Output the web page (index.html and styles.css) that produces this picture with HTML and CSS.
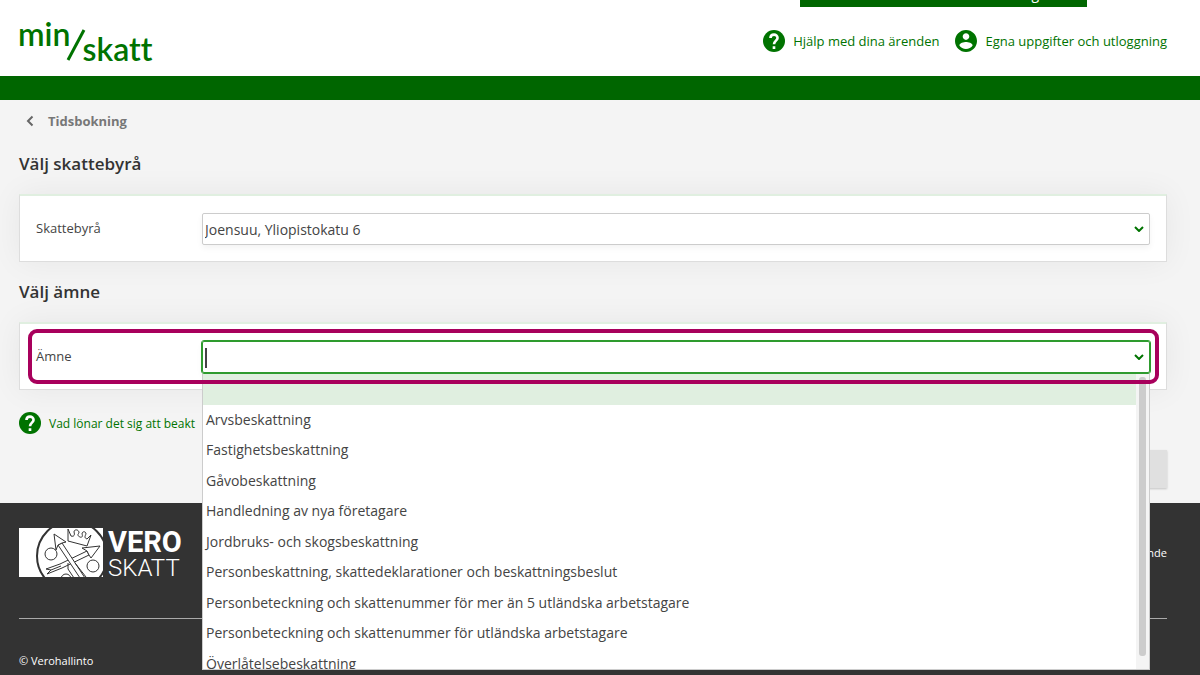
FILE: index.html
```
<!DOCTYPE html>
<html lang="sv">
<head>
    <meta charset="UTF-8">
    <meta name="viewport" content="width=device-width, initial-scale=1.0">
    <title>MinSkatt - Tidsbokning</title>
    <link rel="stylesheet" href="styles.css">
</head>
<body>
    <a class="skip-link" href="#main">g</a>

    <header class="header">
        <a class="logo" href="#" aria-label="min skatt">
            <span class="logo-min">min</span>
            <svg class="logo-slash" viewBox="0 0 20 32" aria-hidden="true"><path d="M18 1 2 31"/></svg>
            <span class="logo-skatt">skatt</span>
        </a>
        <nav class="header-nav">
            <a class="icon-link" href="#">
                <svg class="icon" viewBox="2 2 20 20" aria-hidden="true"><path d="M12 2a10 10 0 1 0 0 20 10 10 0 0 0 0-20z"/><path class="mark" d="M8.800 9.300C8.800 5.200 15.200 5.200 15.200 9.200 15.200 11.600 12 11.800 12 15M12 16.800v2.400"/></svg>
                Hjälp med dina ärenden
            </a>
            <a class="icon-link" href="#">
                <svg class="icon" viewBox="2 2 20 20" aria-hidden="true"><path d="M12 2C6.480 2 2 6.480 2 12s4.480 10 10 10 10-4.480 10-10S17.520 2 12 2zm0 3c1.660 0 3 1.340 3 3s-1.340 3-3 3-3-1.340-3-3 1.340-3 3-3zm0 14.200c-2.500 0-4.710-1.280-6-3.220.03-1.990 4-3.080 6-3.080 1.990 0 5.970 1.090 6 3.080-1.290 1.940-3.500 3.220-6 3.220z"/></svg>
                Egna uppgifter och utloggning
            </a>
        </nav>
    </header>
    <div class="green-bar"></div>

    <main class="main" id="main">
        <a class="back-link" href="#">
            <svg viewBox="0 0 8 12" aria-hidden="true"><path d="M6.500 1.500 2 6l4.500 4.500"/></svg>
            Tidsbokning
        </a>

        <h2>Välj skattebyrå</h2>
        <section class="card">
            <label for="office">Skattebyrå</label>
            <div class="field">
                <select id="office">
                    <option>Joensuu, Yliopistokatu 6</option>
                </select>
                <svg class="chevron" viewBox="0 0 10 6" aria-hidden="true"><path d="m1 1 4 4 4-4"/></svg>
            </div>
        </section>

        <h2>Välj ämne</h2>
        <section class="card">
            <label for="subject">Ämne</label>
            <div class="field open">
                <input type="text" id="subject" role="combobox" aria-expanded="true" aria-controls="subjects">
                <span class="caret"></span>
                <svg class="chevron" viewBox="0 0 10 6" aria-hidden="true"><path d="m1 1 4 4 4-4"/></svg>
                <div class="dropdown">
                    <ul id="subjects" role="listbox">
                        <li class="selected" role="option" aria-selected="true"></li>
                        <li role="option">Arvsbeskattning</li>
                        <li role="option">Fastighetsbeskattning</li>
                        <li role="option">Gåvobeskattning</li>
                        <li role="option">Handledning av nya företagare</li>
                        <li role="option">Jordbruks- och skogsbeskattning</li>
                        <li role="option">Personbeskattning, skattedeklarationer och beskattningsbeslut</li>
                        <li role="option">Personbeteckning och skattenummer för mer än 5 utländska arbetstagare</li>
                        <li role="option">Personbeteckning och skattenummer för utländska arbetstagare</li>
                        <li role="option">Överlåtelsebeskattning</li>
                    </ul>
                    <div class="scrollbar"><div class="thumb"></div></div>
                </div>
            </div>
            <div class="highlight"></div>
        </section>

        <a class="icon-link help" href="#">
            <svg class="icon" viewBox="2 2 20 20" aria-hidden="true"><path d="M12 2a10 10 0 1 0 0 20 10 10 0 0 0 0-20z"/><path class="mark" d="M8.800 9.300C8.800 5.200 15.200 5.200 15.200 9.200 15.200 11.600 12 11.800 12 15M12 16.800v2.400"/></svg>
            Vad lönar det sig att beakt
        </a>

        <div class="actions">
            <button type="button" class="next" aria-label="Nästa" disabled></button>
        </div>
    </main>

    <footer class="footer">
        <div class="footer-top">
            <a class="vero" href="#" aria-label="Vero Skatt">
                <svg class="vero-mark" viewBox="0 0 84 49" aria-hidden="true">
                    <rect class="paper" width="84" height="49"/>
                    <circle class="ring" cx="53" cy="28" r="35"/>
                    <g class="line">
                        <circle cx="32" cy="26" r="6"/>
                        <circle cx="74" cy="38" r="6"/>
                        <circle cx="47" cy="51" r="5"/>
                        <!-- crown -->
                        <path d="M49 1v12l19 5 4-11-4 4c-3-1-2-3-1-5 0-3-4-3-4 0 1 2 0 4-2 3s-3-2-1-4c0-4-5-4-5-1 1 3 0 5-3 4z"/>
                        <!-- arrow pointing up right -->
                        <path class="paper" d="m27 41 14-5 27-13 2 4-27 13-15 6 4-4z"/>
                        <path class="paper" d="m81 18-18 2 5 3 2 4 2 3z"/>
                        <path d="m32 42 10-4"/>
                        <!-- arrow pointing up left -->
                        <path class="paper" d="m39 17 22 33h5L43 15z"/>
                        <path class="paper" d="m35 6 12 8-4 1-4 2-2 5z"/>
                        <path d="m56 35 11 14M49 35v6l6 9"/>
                    </g>
                </svg>
                <span class="vero-name"><b>VERO</b><span>SKATT</span></span>
            </a>
            <a class="footer-link" href="#">Om e-tjänsten och användande</a>
        </div>
        <p class="copyright">© Verohallinto</p>
    </footer>
</body>
</html>
```
FILE: styles.css
```
* {
    box-sizing: border-box;
}

body {
    margin: 0;
    height: 100vh;
    overflow: hidden;
    display: flex;
    flex-direction: column;
    font-family: "Open Sans", "Noto Sans", sans-serif;
    font-size: 14px;
    color: #444;
    background: #f4f4f4;
}

a {
    color: #007300;
    text-decoration: none;
}

.skip-link {
    position: absolute;
    top: -16px;
    left: 800px;
    width: 287px;
    height: 23px;
    padding-right: 48px;
    background: #006600;
    color: #fff;
    line-height: 20px;
    text-align: right;
}

.header {
    flex: none;
    display: flex;
    justify-content: space-between;
    height: 76px;
    padding: 0 33px 0 18px;
    background: #fff;
}

.logo {
    display: flex;
    align-items: flex-start;
    font-family: Lato, sans-serif;
    font-size: 32px;
    font-weight: 600;
    line-height: 32px;
    font-variant-ligatures: none;
}

.logo-min {
    margin-top: 18px;
}

.logo-slash {
    width: 20px;
    height: 32px;
    margin: 29px -4px 0;
    fill: none;
    stroke: #007300;
    stroke-width: 3;
}

.logo-skatt {
    margin-top: 33px;
}

.header-nav {
    display: flex;
    gap: 16px;
    padding-top: 30px;
}

.icon-link {
    display: flex;
    align-items: center;
    gap: 8px;
    height: 22px;
    font-size: 13px;
    white-space: nowrap;
}

.icon {
    flex: none;
    width: 22px;
    height: 22px;
    fill: #007300;
}

.icon .mark {
    fill: none;
    stroke: #fff;
    stroke-width: 2.4;
}

.green-bar {
    flex: none;
    height: 24px;
    background: #006600;
}

.main {
    flex: none;
    padding: 11px 33px 15px 19px;
}

.back-link {
    display: flex;
    align-items: center;
    gap: 14px;
    padding: 0 0 3px 7px;
    color: #777;
    font-size: 13px;
    font-weight: 700;
    line-height: 20px;
}

.back-link svg {
    width: 8px;
    height: 12px;
    fill: none;
    stroke: #666;
    stroke-width: 2;
}

h2 {
    margin: 18px 0;
    font-size: 17px;
    font-weight: 600;
    line-height: 24px;
    color: #333;
}

.card {
    position: relative;
    display: flex;
    height: 68px;
    padding: 16px;
    background: #fff;
    border: 1px solid #ddd;
    border-top: 2px solid #e0efe0;
    box-shadow: 0 0 32px rgba(0, 0, 0, 0.06);
}

.card label {
    width: 166px;
    font-size: 13px;
    line-height: 32px;
}

.field {
    position: relative;
    flex: 1;
    margin-top: 1px;
}

.field select,
.field input {
    display: block;
    width: 100%;
    height: 32px;
    padding: 0 2px;
    border: 1px solid #ccc;
    border-radius: 2px;
    background: #fff;
    color: #444;
    font-family: inherit;
    font-size: 14px;
    appearance: none;
    outline: none;
    box-shadow: 0 3px 6px rgba(0, 0, 0, 0.05);
}

.field.open input {
    border-color: #2e9b2e;
    outline: 1px solid #2e9b2e;
}

.caret {
    position: absolute;
    top: 7px;
    left: 3px;
    width: 2px;
    height: 20px;
    background: #444;
}

.chevron {
    position: absolute;
    top: 13px;
    right: 6px;
    width: 10px;
    height: 6px;
    fill: none;
    stroke: #007300;
    stroke-width: 2;
}

.dropdown {
    position: absolute;
    top: 33px;
    left: 0;
    right: 0;
    z-index: 1;
    display: flex;
    height: 296px;
    overflow: hidden;
    background: #fff;
    border: 1px solid #ccc;
    border-top: 0;
}

.dropdown ul {
    flex: 1;
    display: grid;
    grid-template-rows: repeat(10, 1fr);
    height: 305px;
    margin: 0;
    padding: 0;
    list-style: none;
}

.dropdown li {
    padding-left: 3px;
    line-height: 30px;
}

.dropdown .selected {
    background: #e0efe0;
}

.scrollbar {
    width: 13px;
    padding: 3px 3px 13px;
    background: #f4f4f4;
}

.thumb {
    height: 100%;
    border-radius: 3px;
    background: #ccc;
}

.highlight {
    position: absolute;
    inset: 5px 7px 5px 8px;
    z-index: 2;
    border: 4px solid #a8005c;
    border-radius: 9px;
    pointer-events: none;
}

.help {
    margin-top: 22px;
    font-size: 12px;
}

.actions {
    display: flex;
    justify-content: flex-end;
    margin-top: 16px;
}

.next {
    width: 96px;
    height: 38px;
    border: 0;
    background: #e0e0e0;
    box-shadow: 0 1px 2px rgba(0, 0, 0, 0.2);
}

.footer {
    flex: 1;
    padding: 25px 33px 0 19px;
    background: #333;
    color: #fff;
    font-size: 11px;
}

.footer-top {
    display: flex;
    align-items: flex-start;
    justify-content: space-between;
    height: 91px;
    border-bottom: 1px solid #aaa;
}

.footer a {
    color: #fff;
}

.footer-link {
    line-height: 49px;
}

.vero {
    display: flex;
    gap: 5px;
}

.vero-mark {
    width: 84px;
    height: 49px;
}

.vero-mark .paper {
    fill: #fff;
}

.vero-mark .ring {
    fill: none;
    stroke: #333;
    stroke-width: 2;
}

.vero-mark .line {
    fill: none;
    stroke: #333;
    stroke-width: 1;
}

.vero-name {
    display: flex;
    flex-direction: column;
    font-family: Roboto, sans-serif;
    font-size: 24px;
    font-weight: 300;
    line-height: 24px;
}

.vero-name b {
    font-size: 29px;
    font-weight: 700;
    line-height: 28px;
}

.copyright {
    margin: 32px 0 0;
    line-height: 20px;
}
```
